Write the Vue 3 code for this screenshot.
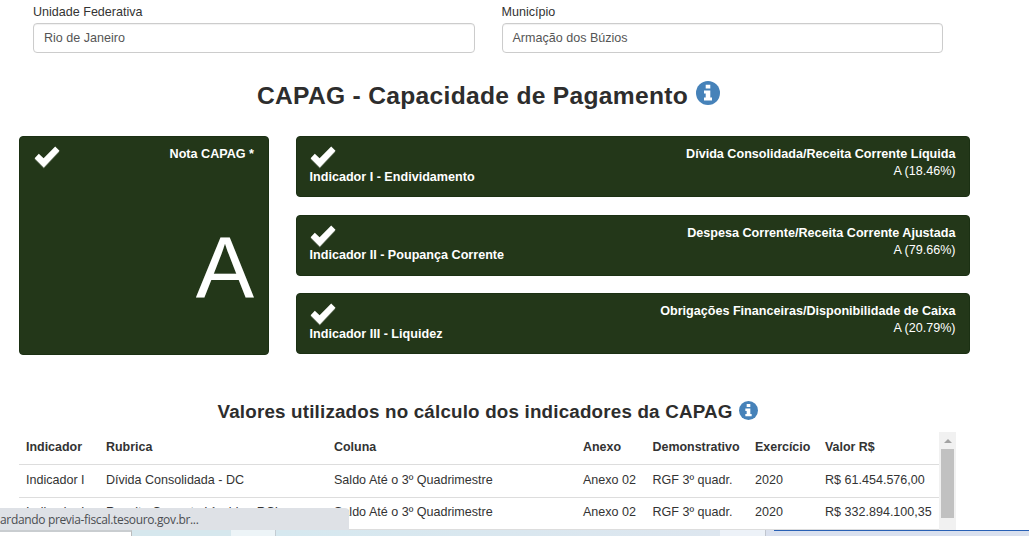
<script setup>
const indicators = [
  { name: 'Indicador I - Endividamento', ratio: 'Dívida Consolidada/Receita Corrente Líquida', grade: 'A (18.46%)' },
  { name: 'Indicador II - Poupança Corrente', ratio: 'Despesa Corrente/Receita Corrente Ajustada', grade: 'A (79.66%)' },
  { name: 'Indicador III - Liquidez', ratio: 'Obrigações Financeiras/Disponibilidade de Caixa', grade: 'A (20.79%)' },
]
const headers = ['Indicador', 'Rubrica', 'Coluna', 'Anexo', 'Demonstrativo', 'Exercício', 'Valor R$']
const rows = [
  ['Indicador I', 'Dívida Consolidada - DC', 'Saldo Até o 3º Quadrimestre', 'Anexo 02', 'RGF 3º quadr.', '2020', 'R$ 61.454.576,00'],
  ['Indicador I', 'Receita Corrente Líquida - RCL', 'Saldo Até o 3º Quadrimestre', 'Anexo 02', 'RGF 3º quadr.', '2020', 'R$ 332.894.100,35'],
]
</script>

<template>
  <div class="page">
    <div class="filters">
      <label class="field">
        <span class="label">Unidade Federativa</span>
        <span class="input">Rio de Janeiro</span>
      </label>
      <label class="field">
        <span class="label">Município</span>
        <span class="input">Armação dos Búzios</span>
      </label>
    </div>

    <h2 class="title">
      <span>CAPAG - Capacidade de Pagamento</span>
      <svg class="info" viewBox="0 0 24 24"><circle cx="12" cy="12" r="12" fill="#4682b9" /><path fill="#fff" d="M9.7 3.8h4.6v3.8H9.7zM8 9.5h6.3v6.9H16v3H8v-3h1.7v-3.9H8z" /></svg>
    </h2>

    <div class="cards">
      <div class="card main">
        <svg class="check" viewBox="0 0 26 22"><path fill="#fff" d="M.6 12.3 4.8 7.7 9.6 12.2 21.2.5 25.5 4.8 9.8 21.5Z" /></svg>
        <strong>Nota CAPAG *</strong>
        <span class="grade">A</span>
      </div>
      <div class="stack">
        <div v-for="item in indicators" :key="item.name" class="card row">
          <div class="left">
            <svg class="check" viewBox="0 0 26 22"><path fill="#fff" d="M.6 12.3 4.8 7.7 9.6 12.2 21.2.5 25.5 4.8 9.8 21.5Z" /></svg>
            <strong>{{ item.name }}</strong>
          </div>
          <div class="right">
            <strong>{{ item.ratio }}</strong>
            <span>{{ item.grade }}</span>
          </div>
        </div>
      </div>
    </div>

    <h3 class="subtitle">
      <span>Valores utilizados no cálculo dos indicadores da CAPAG</span>
      <svg class="info" viewBox="0 0 24 24"><circle cx="12" cy="12" r="12" fill="#4682b9" /><path fill="#fff" d="M9.7 3.8h4.6v3.8H9.7zM8 9.5h6.3v6.9H16v3H8v-3h1.7v-3.9H8z" /></svg>
    </h3>

    <div class="table-area">
      <div class="table">
        <div class="tr head"><span v-for="h in headers" :key="h">{{ h }}</span></div>
        <div v-for="(r, i) in rows" :key="i" class="tr"><span v-for="(c, j) in r" :key="j">{{ c }}</span></div>
      </div>
      <div class="scrollbar"><i class="arrow"></i><i class="thumb"></i></div>
    </div>

    <div class="taskbar">
      <i class="t1"></i><i class="t2"></i><i class="t3"></i><i class="t4"></i><i class="t5"></i><i class="t6"></i><i class="t7"></i>
    </div>
    <div class="status">ardando previa-fiscal.tesouro.gov.br...</div>
  </div>
</template>

<style>
body { margin: 0; background: #fff; overflow: hidden; }
</style>

<style scoped>
.page { position: relative; width: 1029px; height: 536px; overflow: hidden; background: #fff; color: #333; font: 12.55px/17px "Liberation Sans", Arial, sans-serif; display: flex; flex-direction: column; }
.filters { display: flex; gap: 27px; padding: 3px 0 0 33px; height: 50px; }
.field { display: flex; flex-direction: column; width: 441.5px; }
.label { height: 19px; padding-top: 1px; }
.input { box-sizing: border-box; height: 30px; border: 1px solid #ccc; border-radius: 4px; padding: 6px 10px 4px; color: #555; box-shadow: inset 0 1px 1px rgba(0, 0, 0, .06); }
.title, .subtitle { margin: 0; display: flex; white-space: nowrap; color: #2d2d2d; }
.title { height: 56px; margin-top: 27px; padding-left: 257px; font-size: 24.6px; line-height: 31px; letter-spacing: .3px; gap: 8px; }
.title .info { width: 24px; height: 24px; margin-top: 1px; }
.cards { display: flex; gap: 26.5px; padding-left: 19px; height: 219px; }
.card { box-sizing: border-box; background: #233719; color: #fff; border-radius: 4px; border: 1px solid #1b3013; }
.card strong { font-size: 12.6px; }
.main { width: 250px; display: grid; grid-template-columns: 1fr auto; grid-template-rows: 68px 1fr; padding: 9px 14px 0 14px; }
.check { display: block; width: 26px; height: 22px; margin-top: 0; overflow: visible; filter: drop-shadow(0 1px 0 #ffffff55); }
.grade { grid-column: 2; justify-self: end; font-size: 87.5px; line-height: 109px; }
.stack { width: 674.5px; display: flex; flex-direction: column; gap: 17.5px; }
.row { height: 61px; display: flex; justify-content: space-between; padding: 9px 13.5px 0 13px; }
.left, .right { display: flex; flex-direction: column; }
.left strong { padding-top: .5px; }
.right { text-align: right; }
.subtitle { height: 33px; margin-top: 44px; padding-left: 217.5px; font-size: 18.8px; line-height: 26px; letter-spacing: .19px; gap: 6px; }
.subtitle .info { width: 19px; height: 19px; margin-top: 2px; }
.table-area { display: flex; padding-left: 19px; height: 98px; }
.table { width: 920px; }
.tr { box-sizing: border-box; height: 32px; display: grid; grid-template-columns: 80px 228px 249px 69.5px 102.5px 70px 1fr; padding-left: 7px; border-bottom: 1px solid #ddd; line-height: 29px; white-space: nowrap; }
.tr:nth-child(2) { height: 33px; line-height: 31px; }
.head { height: 33px; font-weight: bold; line-height: 30px; font-size: 12.45px; }
.scrollbar { width: 17px; background: #f1f1f1; display: flex; flex-direction: column; align-items: center; }
.arrow { border: 4px solid transparent; border-top: 0; border-bottom: 4px solid #a3a3a3; margin: 7px 0 6px; }
.thumb { width: 13px; height: 69px; background: #c1c1c1; }
.taskbar { display: flex; height: 6px; background: #d9e6ee; }
.taskbar i { box-sizing: border-box; height: 6px; }
.t1 { width: 132px; background: #fff; border-top: 2px solid #c9cdd0; border-right: 1px solid #bbb; }
.t2 { width: 99px; background: #d6e7ed; }
.t3 { width: 45px; background: #edf4f7; border-right: 1px solid #c4ccd2; }
.t4 { width: 444px; background: linear-gradient(90deg, #d6e8ef, #dde6ef); }
.t5 { width: 46px; background: #edf2f8; border-right: 1px solid #c0c5ce; }
.t6 { width: 8px; background: #d9e0ee; }
.t7 { flex: 1; background: #d9e0ee; border-top: 1px solid #2860b5; }
.status { position: absolute; left: 0; top: 508px; width: 349px; height: 22px; background: #dee1e6; border-top-right-radius: 4px; color: #4b4e52; font: 12px/24px "Open Sans", "Noto Sans", sans-serif; letter-spacing: -.34px; white-space: nowrap; }
</style>
